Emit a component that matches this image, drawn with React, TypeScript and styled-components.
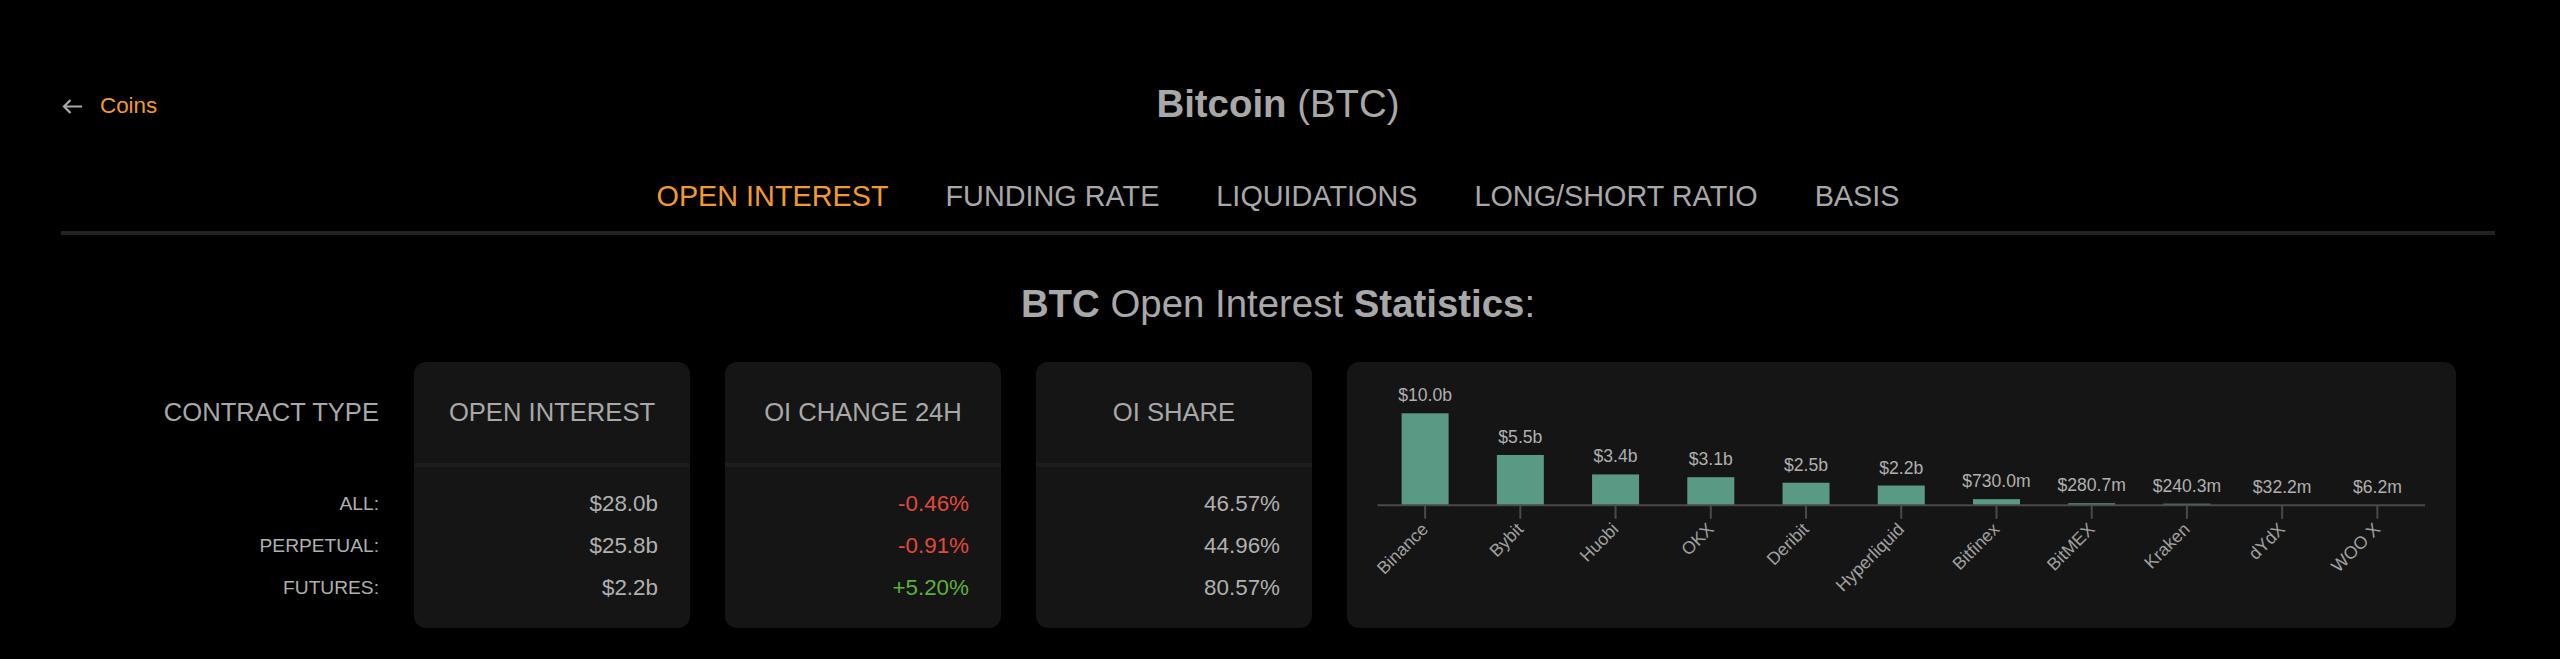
import React from 'react'
import styled, { createGlobalStyle } from 'styled-components'

const GlobalStyle = createGlobalStyle`
  html, body {
    margin: 0;
    padding: 0;
    background: #000;
  }
  body {
    font-family: "Liberation Sans", Arial, Helvetica, sans-serif;
    color: #aaa;
  }
`

const ORANGE = '#f19a2f'
const CARD_BG = '#151515'

const Page = styled.div`
  padding: 0 65px 0 61px;
  min-height: 659px;
  box-sizing: border-box;
`

const Header = styled.div`
  display: grid;
  grid-template-columns: 1fr auto 1fr;
  align-items: center;
  height: 46px;
  padding-top: 81px;
`

const BackLink = styled.a`
  justify-self: start;
  display: flex;
  align-items: center;
  gap: 17px;
  margin-top: 4px;
  padding-left: 1px;
  color: ${ORANGE};
  font-size: 22.4px;
  text-decoration: none;
  cursor: pointer;
`

const Title = styled.h1`
  margin: 0;
  font-size: 38.4px;
  line-height: 46px;
  font-weight: 400;
  color: #a8a8a8;

  b {
    font-weight: 700;
  }
`

const TabBar = styled.nav`
  display: flex;
  justify-content: center;
  margin-top: 52px;
  padding-bottom: 17px;
  border-bottom: 4px solid #222;
`

const Tab = styled.span<{ $active?: boolean }>`
  padding: 0 28.5px;
  font-size: 28.8px;
  line-height: 34.5px;
  color: ${({ $active }) => ($active ? ORANGE : '#a8a8a8')};
  cursor: pointer;
`

const Heading = styled.h2`
  margin: 46px 0 0;
  text-align: center;
  font-size: 38.4px;
  line-height: 46px;
  font-weight: 400;
  color: #a8a8a8;

  b {
    font-weight: 700;
  }
`

const StatsRow = styled.div`
  display: grid;
  grid-template-columns: repeat(4, 276px) 1109px;
  column-gap: 35px;
  justify-content: center;
  margin-top: 35px;
  padding-left: 3px;
`

const Column = styled.div<{ $card?: boolean }>`
  height: 266px;
  border-radius: 12px;
  background: ${({ $card }) => ($card ? CARD_BG : 'transparent')};
  overflow: hidden;
`

const ColumnHeader = styled.div<{ $card?: boolean }>`
  height: 101px;
  display: flex;
  align-items: center;
  justify-content: ${({ $card }) => ($card ? 'center' : 'flex-end')};
  border-bottom: 4px solid ${({ $card }) => ($card ? '#1d1d1d' : 'transparent')};
  font-size: 25.6px;
  color: #a8a8a8;
`

const ColumnBody = styled.div<{ $card?: boolean }>`
  padding: 16px ${({ $card }) => ($card ? '32px' : '0')} 0 0;
`

const Row = styled.div<{ $small?: boolean; $tone?: 'up' | 'down' }>`
  height: 42px;
  line-height: 42px;
  text-align: right;
  font-size: ${({ $small }) => ($small ? '19.2px' : '22.4px')};
  color: ${({ $tone }) => ($tone === 'down' ? '#e2493b' : $tone === 'up' ? '#5cb13a' : '#b0b0b0')};
`

const ChartCard = styled.div`
  height: 266px;
  border-radius: 12px;
  background: ${CARD_BG};
  overflow: hidden;

  svg {
    display: block;
  }
`

type Exchange = { name: string; value: number; label: string }

const exchanges: Exchange[] = [
  { name: 'Binance', value: 10.0, label: '$10.0b' },
  { name: 'Bybit', value: 5.5, label: '$5.5b' },
  { name: 'Huobi', value: 3.4, label: '$3.4b' },
  { name: 'OKX', value: 3.1, label: '$3.1b' },
  { name: 'Deribit', value: 2.5, label: '$2.5b' },
  { name: 'Hyperliquid', value: 2.2, label: '$2.2b' },
  { name: 'Bitfinex', value: 0.73, label: '$730.0m' },
  { name: 'BitMEX', value: 0.2807, label: '$280.7m' },
  { name: 'Kraken', value: 0.2403, label: '$240.3m' },
  { name: 'dYdX', value: 0.0322, label: '$32.2m' },
  { name: 'WOO X', value: 0.0062, label: '$6.2m' },
]

const stats = [
  { type: 'ALL:', oi: '$28.0b', change: '-0.46%', share: '46.57%' },
  { type: 'PERPETUAL:', oi: '$25.8b', change: '-0.91%', share: '44.96%' },
  { type: 'FUTURES:', oi: '$2.2b', change: '+5.20%', share: '80.57%' },
]

const BackArrow = () => (
  <svg width="21" height="15" viewBox="0 0 21 15" fill="none">
    <path d="M20 7.5H2M8.5 1L2 7.5L8.5 14" stroke="#aaa" strokeWidth="2.2" />
  </svg>
)

const OiChart = () => {
  const width = 1109
  const height = 266
  const left = 30.5
  const right = 1078
  const axisY = 143.3
  const band = (right - left) / exchanges.length
  const barWidth = 47

  return (
    <svg width={width} height={height} viewBox={`0 0 ${width} ${height}`}>
      {exchanges.map((ex, i) => {
        const cx = left + band * i + band / 2
        const h = Math.max(0, ex.value * 9.26 - 0.6)
        return (
          <g key={ex.name}>
            <rect x={cx - barWidth / 2} y={axisY - h} width={barWidth} height={h} fill="#5a9a84" />
            <text
              x={cx}
              y={axisY - h - 12}
              textAnchor="middle"
              fontSize="17.6"
              fill="#b0b0b0"
              fontFamily="Liberation Sans, Arial, sans-serif"
            >
              {ex.label}
            </text>
            <line x1={cx} x2={cx} y1={axisY} y2={axisY + 13.5} stroke="#4a4a4a" strokeWidth="2" />
            <text
              transform={`translate(${cx + 4}, ${axisY + 25}) rotate(-45)`}
              textAnchor="end"
              fontSize="17.6"
              fill="#a0a0a0"
              fontFamily="Liberation Sans, Arial, sans-serif"
            >
              {ex.name}
            </text>
          </g>
        )
      })}
      <line x1={left} x2={right} y1={axisY} y2={axisY} stroke="#4a4a4a" strokeWidth="2" />
    </svg>
  )
}

export default function App() {
  const tabs = ['OPEN INTEREST', 'FUNDING RATE', 'LIQUIDATIONS', 'LONG/SHORT RATIO', 'BASIS']

  return (
    <>
      <GlobalStyle />
      <Page>
        <Header>
          <BackLink>
            <BackArrow />
            Coins
          </BackLink>
          <Title>
            <b>Bitcoin</b> (BTC)
          </Title>
          <div />
        </Header>

        <TabBar>
          {tabs.map((t, i) => (
            <Tab key={t} $active={i === 0}>
              {t}
            </Tab>
          ))}
        </TabBar>

        <Heading>
          <b>BTC</b> Open Interest <b>Statistics</b>:
        </Heading>

        <StatsRow>
          <Column>
            <ColumnHeader>CONTRACT TYPE</ColumnHeader>
            <ColumnBody>
              {stats.map(s => (
                <Row key={s.type} $small>
                  {s.type}
                </Row>
              ))}
            </ColumnBody>
          </Column>

          <Column $card>
            <ColumnHeader $card>OPEN INTEREST</ColumnHeader>
            <ColumnBody $card>
              {stats.map(s => (
                <Row key={s.type}>{s.oi}</Row>
              ))}
            </ColumnBody>
          </Column>

          <Column $card>
            <ColumnHeader $card>OI CHANGE 24H</ColumnHeader>
            <ColumnBody $card>
              {stats.map(s => (
                <Row key={s.type} $tone={s.change.startsWith('-') ? 'down' : 'up'}>
                  {s.change}
                </Row>
              ))}
            </ColumnBody>
          </Column>

          <Column $card>
            <ColumnHeader $card>OI SHARE</ColumnHeader>
            <ColumnBody $card>
              {stats.map(s => (
                <Row key={s.type}>{s.share}</Row>
              ))}
            </ColumnBody>
          </Column>

          <ChartCard>
            <OiChart />
          </ChartCard>
        </StatsRow>
      </Page>
    </>
  )
}
